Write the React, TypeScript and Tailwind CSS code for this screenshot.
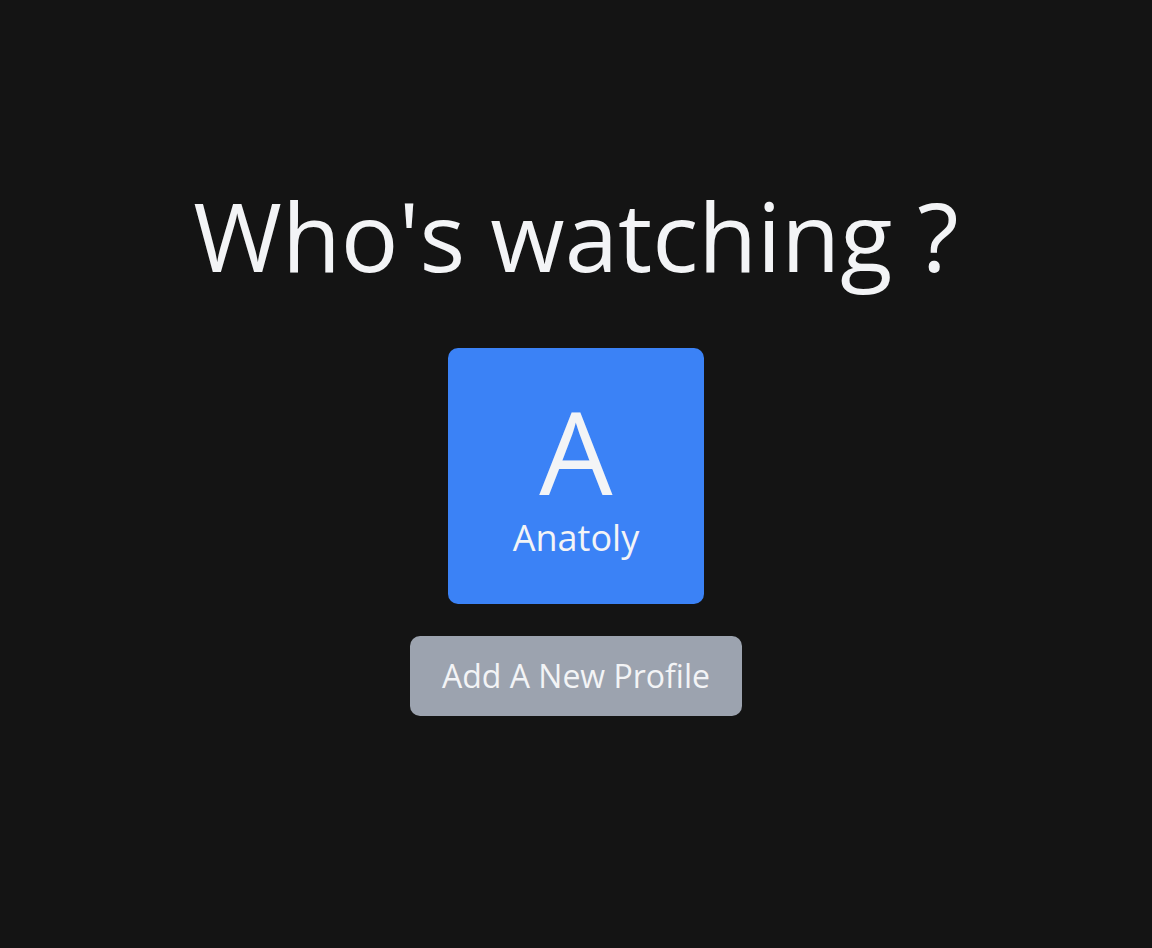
import React from "react";

const profiles = [{ name: "Anatoly" }];

export default function App() {
  return (
    <div className="min-h-screen w-full bg-[#141414] flex flex-col items-center pt-[175px] font-['Open_Sans',sans-serif] text-gray-100">
      <h1 className="text-[96px] leading-[120px] font-normal">Who's watching ?</h1>

      <div className="mt-[53px] flex gap-8">
        {profiles.map((p) => (
          <button
            key={p.name}
            className="w-[256px] h-[256px] rounded-[10px] bg-[#3b82f6] flex flex-col items-center justify-center"
          >
            <span className="text-[116px] leading-[116px] font-normal">{p.name[0]}</span>
            <span className="text-[36px] leading-[44px] mt-[8px]">{p.name}</span>
          </button>
        ))}
      </div>

      <button className="mt-[32px] h-[80px] px-[32px] rounded-[10px] bg-[#9ca3af] text-[32px] text-gray-100">
        Add A New Profile
      </button>
    </div>
  );
}
